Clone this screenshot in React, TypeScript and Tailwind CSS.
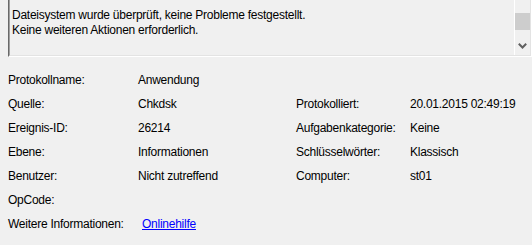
import React from 'react';

const rows: [string, React.ReactNode, string?, string?][] = [
  ['Protokollname:', 'Anwendung'],
  ['Quelle:', 'Chkdsk', 'Protokolliert:', '20.01.2015 02:49:19'],
  ['Ereignis-ID:', '26214', 'Aufgabenkategorie:', 'Keine'],
  ['Ebene:', 'Informationen', 'Schlüsselwörter:', 'Klassisch'],
  ['Benutzer:', 'Nicht zutreffend', 'Computer:', 'st01'],
  ['OpCode:', ''],
];

const App: React.FC = () => {
  return (
    <div
      className="w-[532px] h-[245px] overflow-hidden bg-[#f0f0f0] text-black text-[12px] leading-[15px] tracking-[-0.25px] pl-[8px]"
      style={{ fontFamily: '"Liberation Sans", Arial, sans-serif' }}
    >
      {/* Beschreibung (sunken box, top edge scrolled out of view) */}
      <div className="border-l border-r border-b border-l-[#696969] border-r-white border-b-white">
        <div className="flex h-[56px] border-l border-r border-b border-l-[#a0a0a0] border-r-[#e3e3e3] border-b-[#e3e3e3]">
          <div className="flex-1 pl-[2px] pt-[8px]">
            <div>Dateisystem wurde überprüft, keine Probleme festgestellt.</div>
            <div>Keine weiteren Aktionen erforderlich.</div>
          </div>
          <div className="w-[16px] border-l border-white bg-[#f0f0f0] flex flex-col items-center">
            <div className="mt-[13px] h-[17px] w-full bg-[#cdcdcd]" />
            <svg width="9" height="6" viewBox="0 0 9 6" className="mt-[13px]">
              <path d="M0.8 0.8 L4.5 4.5 L8.2 0.8" fill="none" stroke="#606060" strokeWidth="2" />
            </svg>
          </div>
        </div>
      </div>

      {/* Details */}
      <div className="mt-[11px] grid grid-cols-[130px_158px_114px_1fr] auto-rows-[24px] items-center">
        {rows.map(([l1, v1, l2, v2]) => (
          <React.Fragment key={l1}>
            <span>{l1}</span>
            <span>{v1}</span>
            <span>{l2 ?? ''}</span>
            <span>{v2 ?? ''}</span>
          </React.Fragment>
        ))}
        <span className="whitespace-nowrap">Weitere Informationen:</span>
        <span className="pl-[4px] col-span-3">
          <a href="#" className="text-[#0000ff] underline">Onlinehilfe</a>
        </span>
      </div>
    </div>
  );
};

export default App;
